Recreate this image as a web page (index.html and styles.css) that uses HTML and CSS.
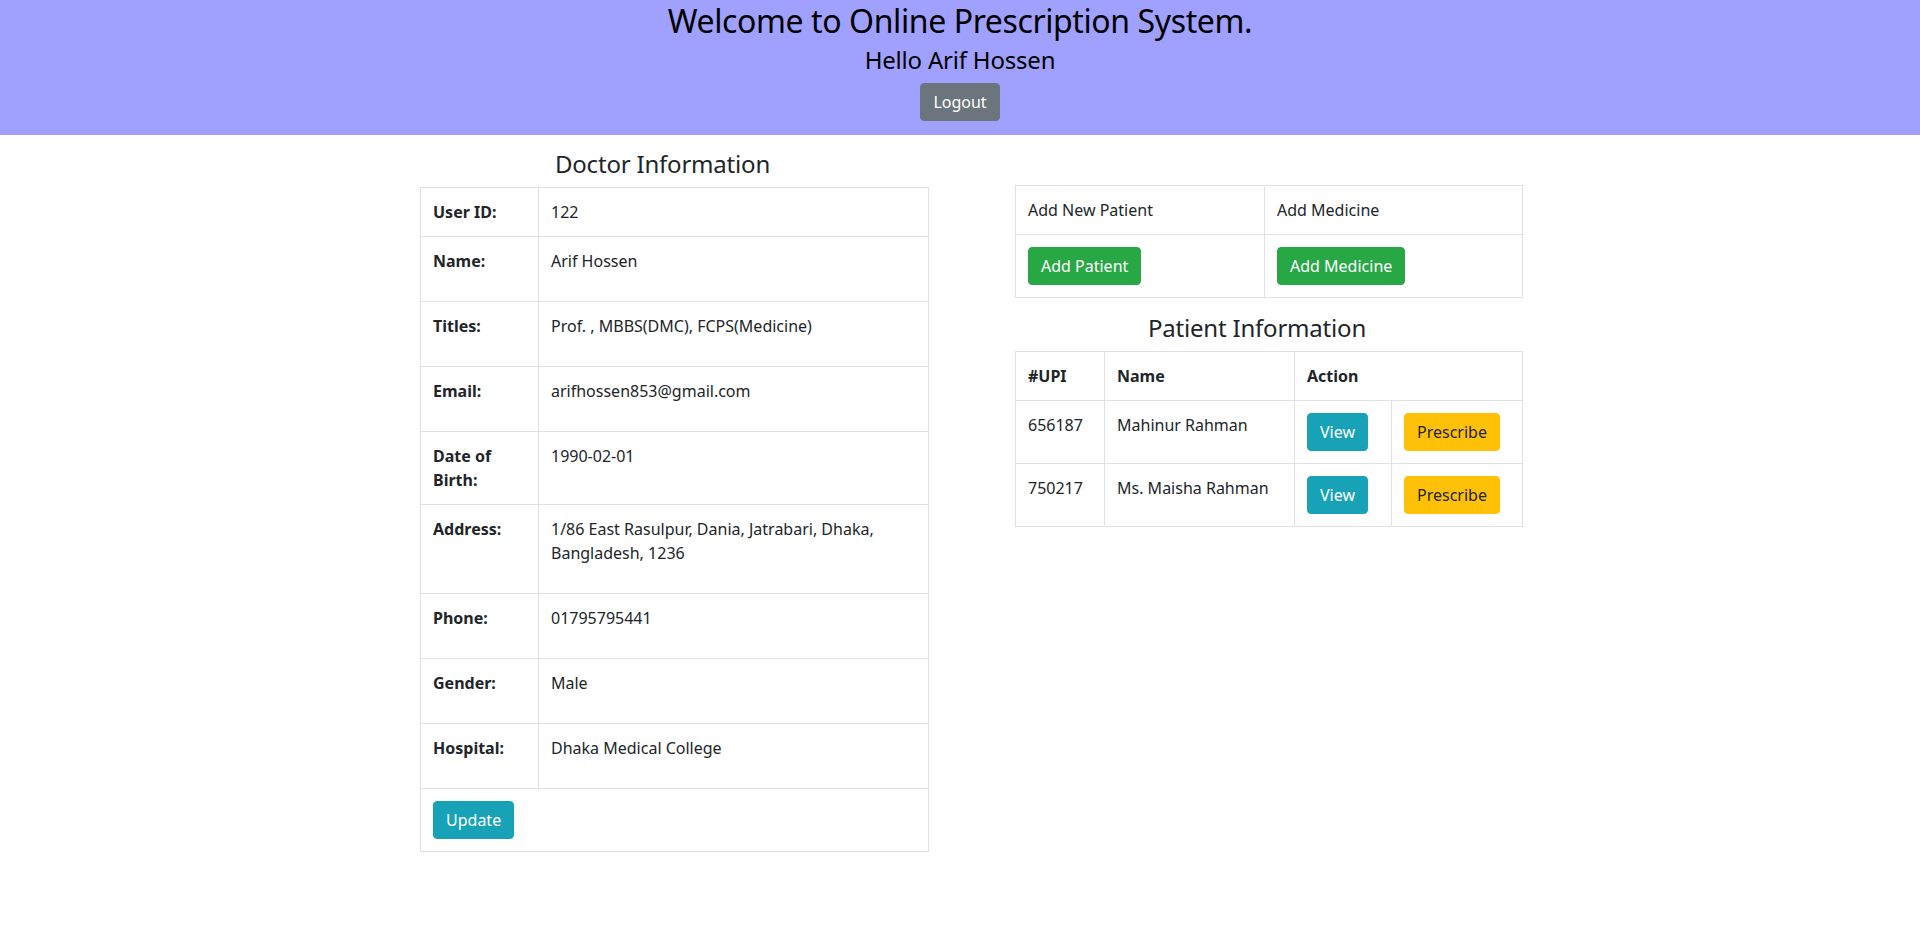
FILE: index.html
```html
<!DOCTYPE html>
<html lang="en">
<head>
<meta charset="utf-8">
<title>Online Prescription System</title>
<link rel="stylesheet" href="styles.css">
</head>
<body>
<header class="topbar">
  <h1 class="title">Welcome to Online Prescription System.</h1>
  <h2 class="greeting">Hello Arif Hossen</h2>
  <button class="btn btn-secondary">Logout</button>
</header>
<main class="content">
  <section class="col col-left">
    <h3 class="section-title">Doctor Information</h3>
    <table class="tbl info-tbl">
      <colgroup><col class="c-label"><col></colgroup>
      <tbody>
        <tr><th>User ID:</th><td>122</td></tr>
        <tr><th>Name:</th><td><p>Arif Hossen</p></td></tr>
        <tr><th>Titles:</th><td><p>Prof. , MBBS(DMC), FCPS(Medicine)</p></td></tr>
        <tr><th>Email:</th><td><p>arifhossen853@gmail.com</p></td></tr>
        <tr><th>Date of Birth:</th><td><p>1990-02-01</p></td></tr>
        <tr><th>Address:</th><td><p>1/86 East Rasulpur, Dania, Jatrabari, Dhaka, Bangladesh, 1236</p></td></tr>
        <tr><th>Phone:</th><td><p>01795795441</p></td></tr>
        <tr><th>Gender:</th><td><p>Male</p></td></tr>
        <tr><th>Hospital:</th><td><p>Dhaka Medical College</p></td></tr>
        <tr><td colspan="2"><button class="btn btn-info">Update</button></td></tr>
      </tbody>
    </table>
  </section>
  <section class="col col-right">
    <table class="tbl actions-tbl">
      <colgroup><col class="c-half"><col></colgroup>
      <tbody>
        <tr><td>Add New Patient</td><td>Add Medicine</td></tr>
        <tr><td><button class="btn btn-success">Add Patient</button></td><td><button class="btn btn-success">Add Medicine</button></td></tr>
      </tbody>
    </table>
    <h3 class="section-title">Patient Information</h3>
    <table class="tbl patients-tbl">
      <colgroup><col class="c-upi"><col class="c-name"><col class="c-view"><col></colgroup>
      <thead>
        <tr><th>#UPI</th><th>Name</th><th colspan="2">Action</th></tr>
      </thead>
      <tbody>
        <tr><td>656187</td><td>Mahinur Rahman</td><td><button class="btn btn-info">View</button></td><td><button class="btn btn-warning">Prescribe</button></td></tr>
        <tr><td>750217</td><td>Ms. Maisha Rahman</td><td><button class="btn btn-info">View</button></td><td><button class="btn btn-warning">Prescribe</button></td></tr>
      </tbody>
    </table>
  </section>
</main>
</body>
</html>
```
FILE: styles.css
```css
* { box-sizing: border-box; }
html, body { margin: 0; padding: 0; }
body {
  font-family: "Noto Sans", "Open Sans", sans-serif;
  font-size: 16px;
  line-height: 24px;
  color: #212529;
  background: #fff;
}
.topbar {
  background: #a0a0ff;
  text-align: center;
  padding: 0 0 14px;
}
.title {
  margin: 0 0 6px;
  padding-top: 2px;
  font-size: 32px;
  font-weight: 400;
  line-height: 1.2;
  letter-spacing: -0.4px;
  color: #000;
}
.greeting {
  margin: 0 0 8px;
  font-size: 24px;
  font-weight: 400;
  line-height: 1.2;
  letter-spacing: -0.2px;
  color: #000;
}
.btn {
  display: inline-block;
  font-family: inherit;
  font-size: 16px;
  line-height: 24px;
  padding: 6px 12px;
  border: 1px solid transparent;
  border-radius: 4px;
  color: #fff;
  cursor: pointer;
  vertical-align: middle;
}
.btn-secondary { background: #6c757d; border-color: #6c757d; }
.btn-info { background: #17a2b8; border-color: #17a2b8; }
.btn-success { background: #28a745; border-color: #28a745; }
.btn-warning { background: #ffc107; border-color: #ffc107; color: #212529; }

.content {
  display: flex;
  align-items: flex-start;
  gap: 86px;
  width: 1103px;
  margin-left: calc(50% - 540px);
  padding-top: 15px;
}
.col-left { width: 509px; }
.col-right { width: 508px; padding-top: 35px; }
.section-title {
  margin: 0 0 8px;
  padding-right: 24px;
  text-align: center;
  font-size: 24px;
  font-weight: 400;
  line-height: 1.2;
  letter-spacing: -0.2px;
}
.tbl {
  width: 100%;
  border-collapse: collapse;
  table-layout: fixed;
  margin-bottom: 16px;
}
.tbl th, .tbl td {
  border: 1px solid #dee2e6;
  padding: 12px;
  text-align: left;
  vertical-align: top;
}
.tbl th { font-weight: 700; }
.tbl p { margin: 0 0 16px; }
.c-label { width: 118px; }
.c-half { width: 249px; }
.c-upi { width: 89px; }
.c-name { width: 190px; }
.c-view { width: 97px; }
```
